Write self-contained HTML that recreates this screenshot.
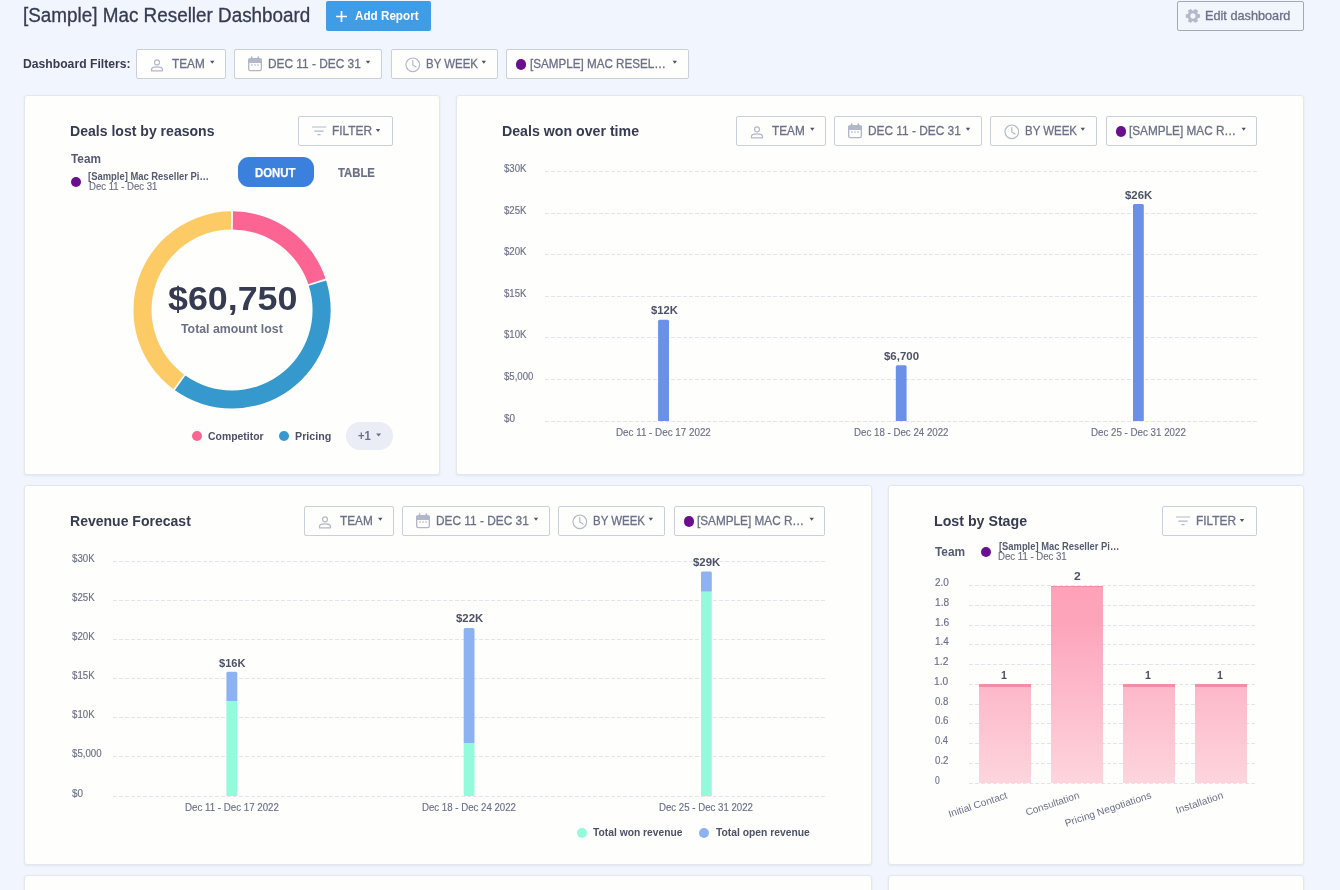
<!DOCTYPE html>
<html lang="en"><head><meta charset="utf-8"><title>[Sample] Mac Reseller Dashboard</title>
<style>
*{box-sizing:border-box;margin:0;padding:0}
html,body{width:1340px;height:890px;overflow:hidden;background:#f1f5fd;font-family:"Liberation Sans", Arial, sans-serif;}
#page{position:relative;width:1340px;height:890px;overflow:hidden;will-change:transform}
.t{position:absolute;white-space:nowrap;transform-origin:0 50%;display:block}
.ic{position:absolute;overflow:visible}
.btn{position:absolute;background:#fefefd;border:1px solid #cbcfd9;border-radius:2px}
.addbtn{position:absolute;background:#3f9de8;border-radius:2px}
.editbtn{position:absolute;border:1px solid #a3a8b8;border-radius:2px;background:#f1f5fc}
.card{position:absolute;background:#fefefc;border:1px solid #e2e7ee;border-radius:3px;box-shadow:0 1px 2px rgba(180,190,210,.25)}
.dot{position:absolute;width:10.200px;height:10.200px;border-radius:50%}
.pill{position:absolute;background:#3a80dc;border-radius:11px}
.more{position:absolute;background:#ebedf6;border-radius:14px}
.bar{position:absolute}
</style></head>
<body><div id="page">
<header>
<span class="t" id="t0" style="left:23.24px;top:6.41px;font-size:19.6px;line-height:19.6px;color:#363b52;font-weight:400;-webkit-text-stroke:0.3px #363b52;transform:scaleX(0.963);">[Sample] Mac Reseller Dashboard</span>
<div class="addbtn" style="left:326px;top:1px;width:105px;height:30px"></div>
<svg class="ic" style="left:336.4px;top:11.2px" width="11" height="11" viewBox="0 0 11 11" stroke="#fff" stroke-width="1.7" fill="none"><path d="M5.5 0v11M0 5.5h11"/></svg>
<span class="t" id="t1" style="left:354.8px;top:9.84px;font-size:12px;line-height:12px;color:#fff;font-weight:700;transform:scaleX(0.9731);">Add Report</span>
<div class="editbtn" style="left:1177px;top:1px;width:127px;height:30px"></div>
<svg class="ic" style="left:1183.65px;top:7px" width="17.9" height="17.9" viewBox="0 0 24 24"><path transform="rotate(90 12 12)" fill="#b5b8c8" d="M19.14 12.94c.04-.3.06-.61.06-.94 0-.32-.02-.64-.07-.94l2.03-1.58a.49.49 0 0 0 .12-.61l-1.92-3.32a.488.488 0 0 0-.59-.22l-2.39.96c-.5-.38-1.03-.7-1.62-.94l-.36-2.54a.484.484 0 0 0-.48-.41h-3.84c-.24 0-.43.17-.47.41l-.36 2.54c-.59.24-1.13.57-1.62.94l-2.39-.96c-.22-.08-.47 0-.59.22L2.74 8.87c-.12.21-.08.47.12.61l2.03 1.58c-.05.3-.09.63-.09.94s.02.64.07.94l-2.03 1.58a.49.49 0 0 0-.12.61l1.92 3.32c.12.22.37.29.59.22l2.39-.96c.5.38 1.03.7 1.62.94l.36 2.54c.05.24.24.41.48.41h3.84c.24 0 .44-.17.47-.41l.36-2.54c.59-.24 1.13-.56 1.62-.94l2.39.96c.22.08.47 0 .59-.22l1.92-3.32c.12-.22.07-.47-.12-.61l-2.01-1.58zM12 15.6c-1.98 0-3.6-1.62-3.6-3.6s1.62-3.6 3.6-3.6 3.6 1.62 3.6 3.6-1.62 3.6-3.6 3.6z"/></svg>
<span class="t" id="t2" style="left:1205.11px;top:9.6px;font-size:12.4px;line-height:12.4px;color:#6b6f88;font-weight:400;-webkit-text-stroke:0.3px #6b6f88;transform:scaleX(1.0248);">Edit dashboard</span>
</header>
<nav>
<span class="t" id="t3" style="left:23.28px;top:57.2px;font-size:13px;line-height:13px;color:#363b52;font-weight:700;transform:scaleX(0.9361);">Dashboard Filters:</span>
<div class="btn" style="left:136px;top:49px;width:90px;height:30px;"></div>
<svg class="ic" style="left:150px;top:57.900000000000006px" width="14" height="14" viewBox="0 0 24 24" fill="none" stroke="#b3b7c9" stroke-width="2"><circle cx="12" cy="7.5" r="4.2"/><path d="M2.5 22v-2.2c0-3 4.5-4.6 9.5-4.6s9.5 1.6 9.5 4.6V22z" stroke-linejoin="round"/></svg>
<span class="t" id="t4" style="left:171.9px;top:57.2px;font-size:13px;line-height:13px;color:#6b6f88;font-weight:400;-webkit-text-stroke:0.3px #6b6f88;transform:scaleX(0.9076);">TEAM</span>
<svg class="ic" style="left:0;top:0" width="1340" height="890"><path d="M210.1 60.8h4.4l-2.2 3z" fill="#4f546b"/></svg>
<div class="btn" style="left:234px;top:49px;width:148px;height:30px;"></div>
<svg class="ic" style="left:247px;top:56.400000000000006px" width="16" height="16" viewBox="0 0 24 24" fill="none" stroke="#b3b7c9" stroke-width="2"><rect x="2.5" y="4" width="19" height="18" rx="2.5"/><path d="M2.5 5.5h19v4h-19z" fill="#b3b7c9"/><path d="M7 1.5v4M17 1.5v4" stroke-width="2.4" stroke-linecap="round"/><path d="M6.5 13.5h2M11 13.5h2M15.5 13.5h2" stroke-width="2"/></svg>
<span class="t" id="t5" style="left:268.39px;top:57.2px;font-size:13px;line-height:13px;color:#6b6f88;font-weight:400;-webkit-text-stroke:0.3px #6b6f88;transform:scaleX(0.9129);">DEC 11 - DEC 31</span>
<svg class="ic" style="left:0;top:0" width="1340" height="890"><path d="M365.8 60.8h4.4l-2.2 3z" fill="#4f546b"/></svg>
<div class="btn" style="left:391px;top:49px;width:107px;height:30px;"></div>
<svg class="ic" style="left:404.7px;top:57.1px" width="15.6" height="15.6" viewBox="0 0 24 24" fill="none" stroke="#b3b7c9" stroke-width="1.8"><circle cx="12" cy="12" r="10.500"/><path d="M12 5.5V12.5l5 3" stroke-linecap="round" stroke-linejoin="round"/></svg>
<span class="t" id="t6" style="left:426.16px;top:57.2px;font-size:13px;line-height:13px;color:#6b6f88;font-weight:400;-webkit-text-stroke:0.3px #6b6f88;transform:scaleX(0.8809);">BY WEEK</span>
<svg class="ic" style="left:0;top:0" width="1340" height="890"><path d="M481.6 60.8h4.4l-2.2 3z" fill="#4f546b"/></svg>
<div class="btn" style="left:506px;top:49px;width:183px;height:30px;"></div>
<i class="dot" style="left:515.8px;top:59.400000000000006px;background:#6a0f8e"></i>
<span class="t" id="t7" style="left:529.89px;top:57.2px;font-size:13px;line-height:13px;color:#6b6f88;font-weight:400;-webkit-text-stroke:0.3px #6b6f88;transform:scaleX(0.8959);">[SAMPLE] MAC RESEL…</span>
<svg class="ic" style="left:0;top:0" width="1340" height="890"><path d="M672.6 60.8h4.4l-2.2 3z" fill="#4f546b"/></svg>
</nav>
<main>
<section>
<div class="card" style="left:24px;top:95px;width:416px;height:380px"></div>
<span class="t" id="t8" style="left:70.06px;top:123px;font-size:15px;line-height:15px;color:#363b52;font-weight:700;transform:scaleX(0.9369);">Deals lost by reasons</span>
<div class="btn" style="left:298px;top:116px;width:95px;height:30px;"></div>
<svg class="ic" style="left:312px;top:126px" width="14" height="10" viewBox="0 0 14 10" fill="none" stroke="#b3b7c9" stroke-width="1.15"><path d="M0 1h14M2.3 5.1h9.4M5.5 8.6h3"/></svg>
<span class="t" id="t9" style="left:332.08px;top:124.2px;font-size:13px;line-height:13px;color:#6b6f88;font-weight:400;-webkit-text-stroke:0.3px #6b6f88;transform:scaleX(0.9152);">FILTER</span>
<svg class="ic" style="left:0;top:0" width="1340" height="890"><path d="M375.8 129h4.4l-2.2 3z" fill="#4f546b"/></svg>
<span class="t" id="t10" style="left:70.81px;top:152.84px;font-size:12px;line-height:12px;color:#555a70;font-weight:700;transform:scaleX(0.982);">Team</span>
<i class="dot" style="left:71px;top:177px;background:#6a0f8e"></i>
<span class="t" id="t11" style="left:87.76px;top:171.53px;font-size:10px;line-height:10px;color:#555a70;font-weight:700;transform:scaleX(0.9416);">[Sample] Mac Reseller Pi…</span>
<span class="t" id="t12" style="left:88.85px;top:182.23px;font-size:10px;line-height:10px;color:#6b6f88;font-weight:400;-webkit-text-stroke:0.15px #6b6f88;transform:scaleX(0.9547);">Dec 11 - Dec 31</span>
<div class="pill" style="left:238px;top:157px;width:76px;height:29.5px"></div>
<span class="t" id="t13" style="left:254.67px;top:166.84px;font-size:12px;line-height:12px;color:#fff;font-weight:700;-webkit-text-stroke:0.25px #fff;transform:scaleX(0.9464);">DONUT</span>
<span class="t" id="t14" style="left:337.58px;top:166.84px;font-size:12px;line-height:12px;color:#6b6f88;font-weight:700;-webkit-text-stroke:0.2px #6b6f88;transform:scaleX(0.9432);">TABLE</span>
<svg class="ic" style="left:0;top:0" width="1340" height="890"><path d="M233 211.35A98.6 98.6 0 0 1 325.53 278.58L308.37 284.34A80.5 80.5 0 0 0 232.82 229.45Z" fill="#fb6493"/><path d="M326.11 280.38A98.6 98.6 0 0 1 174.86 390.27L185.36 375.53A80.5 80.5 0 0 0 308.85 285.81Z" fill="#3699cd"/><path d="M173.33 389.16A98.6 98.6 0 0 1 231.1 211.35L231.28 229.45A80.5 80.5 0 0 0 184.11 374.62Z" fill="#fdcb66"/></svg>
<span class="t" id="t15" style="left:167.76px;top:280.82px;font-size:34px;line-height:34px;color:#363b52;font-weight:700;transform:scaleX(1.0531);">$60,750</span>
<span class="t" id="t16" style="left:181.02px;top:322.96px;font-size:12.8px;line-height:12.8px;color:#6b6f88;font-weight:700;transform:scaleX(0.963);">Total amount lost</span>
<i class="dot" style="left:192px;top:431px;background:#f96593"></i>
<span class="t" id="t17" style="left:207.66px;top:430.69px;font-size:11px;line-height:11px;color:#4c5167;font-weight:700;transform:scaleX(0.9471);">Competitor</span>
<i class="dot" style="left:279px;top:431px;background:#3699cd"></i>
<span class="t" id="t18" style="left:295.09px;top:430.69px;font-size:11px;line-height:11px;color:#4c5167;font-weight:700;transform:scaleX(0.9734);">Pricing</span>
<div class="more" style="left:345.7px;top:422px;width:47px;height:27.5px"></div>
<span class="t" id="t19" style="left:357.79px;top:429.84px;font-size:12px;line-height:12px;color:#6b6f88;font-weight:700;transform:scaleX(0.9393);">+1</span>
<svg class="ic" style="left:0;top:0" width="1340" height="890"><path d="M376.1 433.4h5l-2.5 3.1z" fill="#6b6f88"/></svg>
</section>
<section>
<div class="card" style="left:456px;top:95px;width:848px;height:380px"></div>
<span class="t" id="t20" style="left:502.06px;top:123px;font-size:15px;line-height:15px;color:#363b52;font-weight:700;transform:scaleX(0.9447);">Deals won over time</span>
<div class="btn" style="left:736px;top:116px;width:90px;height:30px;"></div>
<svg class="ic" style="left:750px;top:124.89999999999999px" width="14" height="14" viewBox="0 0 24 24" fill="none" stroke="#b3b7c9" stroke-width="2"><circle cx="12" cy="7.5" r="4.2"/><path d="M2.5 22v-2.2c0-3 4.5-4.6 9.5-4.6s9.5 1.6 9.5 4.6V22z" stroke-linejoin="round"/></svg>
<span class="t" id="t21" style="left:771.9px;top:124.2px;font-size:13px;line-height:13px;color:#6b6f88;font-weight:400;-webkit-text-stroke:0.3px #6b6f88;transform:scaleX(0.9076);">TEAM</span>
<svg class="ic" style="left:0;top:0" width="1340" height="890"><path d="M810.1 127.8h4.4l-2.2 3z" fill="#4f546b"/></svg>
<div class="btn" style="left:834px;top:116px;width:148px;height:30px;"></div>
<svg class="ic" style="left:847px;top:123.39999999999999px" width="16" height="16" viewBox="0 0 24 24" fill="none" stroke="#b3b7c9" stroke-width="2"><rect x="2.5" y="4" width="19" height="18" rx="2.5"/><path d="M2.5 5.5h19v4h-19z" fill="#b3b7c9"/><path d="M7 1.5v4M17 1.5v4" stroke-width="2.4" stroke-linecap="round"/><path d="M6.5 13.5h2M11 13.5h2M15.5 13.5h2" stroke-width="2"/></svg>
<span class="t" id="t22" style="left:868.39px;top:124.2px;font-size:13px;line-height:13px;color:#6b6f88;font-weight:400;-webkit-text-stroke:0.3px #6b6f88;transform:scaleX(0.9129);">DEC 11 - DEC 31</span>
<svg class="ic" style="left:0;top:0" width="1340" height="890"><path d="M965.8 127.8h4.4l-2.2 3z" fill="#4f546b"/></svg>
<div class="btn" style="left:990px;top:116px;width:107px;height:30px;"></div>
<svg class="ic" style="left:1003.7px;top:124.1px" width="15.6" height="15.6" viewBox="0 0 24 24" fill="none" stroke="#b3b7c9" stroke-width="1.8"><circle cx="12" cy="12" r="10.500"/><path d="M12 5.5V12.5l5 3" stroke-linecap="round" stroke-linejoin="round"/></svg>
<span class="t" id="t23" style="left:1025.16px;top:124.2px;font-size:13px;line-height:13px;color:#6b6f88;font-weight:400;-webkit-text-stroke:0.3px #6b6f88;transform:scaleX(0.8809);">BY WEEK</span>
<svg class="ic" style="left:0;top:0" width="1340" height="890"><path d="M1080.6 127.8h4.4l-2.2 3z" fill="#4f546b"/></svg>
<div class="btn" style="left:1106px;top:116px;width:151px;height:30px;"></div>
<i class="dot" style="left:1115.8px;top:126.39999999999999px;background:#6a0f8e"></i>
<span class="t" id="t24" style="left:1129.21px;top:124.2px;font-size:13px;line-height:13px;color:#6b6f88;font-weight:400;-webkit-text-stroke:0.3px #6b6f88;transform:scaleX(0.9043);">[SAMPLE] MAC R…</span>
<svg class="ic" style="left:0;top:0" width="1340" height="890"><path d="M1241.5 127.8h4.4l-2.2 3z" fill="#4f546b"/></svg>
<svg class="ic" style="left:0;top:0" width="1340" height="890"><line x1="545" x2="1257" y1="171.5" y2="171.5" stroke="#e4e4ea" stroke-width="1" stroke-dasharray="4 2"/><line x1="545" x2="1257" y1="213.5" y2="213.5" stroke="#e4e4ea" stroke-width="1" stroke-dasharray="4 2"/><line x1="545" x2="1257" y1="254.5" y2="254.5" stroke="#e4e4ea" stroke-width="1" stroke-dasharray="4 2"/><line x1="545" x2="1257" y1="296.5" y2="296.5" stroke="#e4e4ea" stroke-width="1" stroke-dasharray="4 2"/><line x1="545" x2="1257" y1="337.5" y2="337.5" stroke="#e4e4ea" stroke-width="1" stroke-dasharray="4 2"/><line x1="545" x2="1257" y1="379.5" y2="379.5" stroke="#e4e4ea" stroke-width="1" stroke-dasharray="4 2"/><line x1="545" x2="1257" y1="421.5" y2="421.5" stroke="#e4e4ea" stroke-width="1" stroke-dasharray="4 2"/></svg>
<span class="t" id="t25" style="left:503.62px;top:163.53px;font-size:10px;line-height:10px;color:#6b6f88;font-weight:400;-webkit-text-stroke:0.15px #6b6f88;transform:scaleX(0.9609);">$30K</span>
<span class="t" id="t26" style="left:503.62px;top:205.53px;font-size:10px;line-height:10px;color:#6b6f88;font-weight:400;-webkit-text-stroke:0.15px #6b6f88;transform:scaleX(0.9609);">$25K</span>
<span class="t" id="t27" style="left:503.62px;top:246.53px;font-size:10px;line-height:10px;color:#6b6f88;font-weight:400;-webkit-text-stroke:0.15px #6b6f88;transform:scaleX(0.9609);">$20K</span>
<span class="t" id="t28" style="left:503.62px;top:288.54px;font-size:10px;line-height:10px;color:#6b6f88;font-weight:400;-webkit-text-stroke:0.15px #6b6f88;transform:scaleX(0.9609);">$15K</span>
<span class="t" id="t29" style="left:503.62px;top:329.54px;font-size:10px;line-height:10px;color:#6b6f88;font-weight:400;-webkit-text-stroke:0.15px #6b6f88;transform:scaleX(0.9609);">$10K</span>
<span class="t" id="t30" style="left:503.74px;top:371.54px;font-size:10px;line-height:10px;color:#6b6f88;font-weight:400;-webkit-text-stroke:0.15px #6b6f88;transform:scaleX(0.9581);">$5,000</span>
<span class="t" id="t31" style="left:503.68px;top:413.54px;font-size:10px;line-height:10px;color:#6b6f88;font-weight:400;-webkit-text-stroke:0.15px #6b6f88;transform:scaleX(0.9867);">$0</span>
<svg class="ic" style="left:0;top:0" width="1340" height="890"><path d="M658.1 421V321.2Q658.1 319.7 659.6 319.7H667.5Q669 319.7 669 321.2V421Z" fill="#6a90e8"/></svg>
<svg class="ic" style="left:0;top:0" width="1340" height="890"><path d="M895.8 421V366.7Q895.8 365.2 897.3 365.2H905.0999999999999Q906.5999999999999 365.2 906.5999999999999 366.7V421Z" fill="#6a90e8"/></svg>
<svg class="ic" style="left:0;top:0" width="1340" height="890"><path d="M1133 421V205.5Q1133 204 1134.5 204H1142.3Q1143.8 204 1143.8 205.5V421Z" fill="#6a90e8"/></svg>
<span class="t" id="t32" style="left:651.31px;top:304.89px;font-size:11px;line-height:11px;color:#4c5167;font-weight:700;transform:scaleX(1.019);">$12K</span>
<span class="t" id="t33" style="left:884.29px;top:350.69px;font-size:11px;line-height:11px;color:#4c5167;font-weight:700;transform:scaleX(1.042);">$6,700</span>
<span class="t" id="t34" style="left:1125.3px;top:190.49px;font-size:11px;line-height:11px;color:#4c5167;font-weight:700;transform:scaleX(1.0347);">$26K</span>
<span class="t" id="t35" style="left:616.02px;top:428.24px;font-size:10px;line-height:10px;color:#6b6f88;font-weight:400;-webkit-text-stroke:0.15px #6b6f88;transform:scaleX(0.9821);">Dec 11 - Dec 17 2022</span>
<span class="t" id="t36" style="left:853.97px;top:428.24px;font-size:10px;line-height:10px;color:#6b6f88;font-weight:400;-webkit-text-stroke:0.15px #6b6f88;transform:scaleX(0.9716);">Dec 18 - Dec 24 2022</span>
<span class="t" id="t37" style="left:1090.63px;top:428.24px;font-size:10px;line-height:10px;color:#6b6f88;font-weight:400;-webkit-text-stroke:0.15px #6b6f88;transform:scaleX(0.9746);">Dec 25 - Dec 31 2022</span>
</section>
<section>
<div class="card" style="left:24px;top:485px;width:848px;height:380px"></div>
<span class="t" id="t38" style="left:70.07px;top:513px;font-size:15px;line-height:15px;color:#363b52;font-weight:700;transform:scaleX(0.9349);">Revenue Forecast</span>
<div class="btn" style="left:304px;top:506px;width:90px;height:30px;"></div>
<svg class="ic" style="left:318px;top:514.9000000000001px" width="14" height="14" viewBox="0 0 24 24" fill="none" stroke="#b3b7c9" stroke-width="2"><circle cx="12" cy="7.5" r="4.2"/><path d="M2.5 22v-2.2c0-3 4.5-4.6 9.5-4.6s9.5 1.6 9.5 4.6V22z" stroke-linejoin="round"/></svg>
<span class="t" id="t39" style="left:339.9px;top:514.2px;font-size:13px;line-height:13px;color:#6b6f88;font-weight:400;-webkit-text-stroke:0.3px #6b6f88;transform:scaleX(0.9076);">TEAM</span>
<svg class="ic" style="left:0;top:0" width="1340" height="890"><path d="M378.1 517.8h4.4l-2.2 3z" fill="#4f546b"/></svg>
<div class="btn" style="left:402px;top:506px;width:148px;height:30px;"></div>
<svg class="ic" style="left:415px;top:513.4000000000001px" width="16" height="16" viewBox="0 0 24 24" fill="none" stroke="#b3b7c9" stroke-width="2"><rect x="2.5" y="4" width="19" height="18" rx="2.5"/><path d="M2.5 5.5h19v4h-19z" fill="#b3b7c9"/><path d="M7 1.5v4M17 1.5v4" stroke-width="2.4" stroke-linecap="round"/><path d="M6.5 13.5h2M11 13.5h2M15.5 13.5h2" stroke-width="2"/></svg>
<span class="t" id="t40" style="left:436.39px;top:514.2px;font-size:13px;line-height:13px;color:#6b6f88;font-weight:400;-webkit-text-stroke:0.3px #6b6f88;transform:scaleX(0.9129);">DEC 11 - DEC 31</span>
<svg class="ic" style="left:0;top:0" width="1340" height="890"><path d="M533.8 517.8h4.4l-2.2 3z" fill="#4f546b"/></svg>
<div class="btn" style="left:558px;top:506px;width:107px;height:30px;"></div>
<svg class="ic" style="left:571.7px;top:514.1px" width="15.6" height="15.6" viewBox="0 0 24 24" fill="none" stroke="#b3b7c9" stroke-width="1.8"><circle cx="12" cy="12" r="10.500"/><path d="M12 5.5V12.5l5 3" stroke-linecap="round" stroke-linejoin="round"/></svg>
<span class="t" id="t41" style="left:593.16px;top:514.2px;font-size:13px;line-height:13px;color:#6b6f88;font-weight:400;-webkit-text-stroke:0.3px #6b6f88;transform:scaleX(0.8809);">BY WEEK</span>
<svg class="ic" style="left:0;top:0" width="1340" height="890"><path d="M648.6 517.8h4.4l-2.2 3z" fill="#4f546b"/></svg>
<div class="btn" style="left:674px;top:506px;width:151px;height:30px;"></div>
<i class="dot" style="left:683.8px;top:516.4000000000001px;background:#6a0f8e"></i>
<span class="t" id="t42" style="left:697.21px;top:514.2px;font-size:13px;line-height:13px;color:#6b6f88;font-weight:400;-webkit-text-stroke:0.3px #6b6f88;transform:scaleX(0.9043);">[SAMPLE] MAC R…</span>
<svg class="ic" style="left:0;top:0" width="1340" height="890"><path d="M809.5 517.8h4.4l-2.2 3z" fill="#4f546b"/></svg>
<svg class="ic" style="left:0;top:0" width="1340" height="890"><line x1="113" x2="825" y1="561.5" y2="561.5" stroke="#e4e4ea" stroke-width="1" stroke-dasharray="4 2"/><line x1="113" x2="825" y1="600.5" y2="600.5" stroke="#e4e4ea" stroke-width="1" stroke-dasharray="4 2"/><line x1="113" x2="825" y1="639.5" y2="639.5" stroke="#e4e4ea" stroke-width="1" stroke-dasharray="4 2"/><line x1="113" x2="825" y1="678.5" y2="678.5" stroke="#e4e4ea" stroke-width="1" stroke-dasharray="4 2"/><line x1="113" x2="825" y1="717.5" y2="717.5" stroke="#e4e4ea" stroke-width="1" stroke-dasharray="4 2"/><line x1="113" x2="825" y1="756.5" y2="756.5" stroke="#e4e4ea" stroke-width="1" stroke-dasharray="4 2"/><line x1="113" x2="825" y1="796.5" y2="796.5" stroke="#e4e4ea" stroke-width="1" stroke-dasharray="4 2"/></svg>
<span class="t" id="t43" style="left:71.85px;top:553.53px;font-size:10px;line-height:10px;color:#6b6f88;font-weight:400;-webkit-text-stroke:0.15px #6b6f88;transform:scaleX(0.9668);">$30K</span>
<span class="t" id="t44" style="left:71.85px;top:592.53px;font-size:10px;line-height:10px;color:#6b6f88;font-weight:400;-webkit-text-stroke:0.15px #6b6f88;transform:scaleX(0.9668);">$25K</span>
<span class="t" id="t45" style="left:71.85px;top:631.53px;font-size:10px;line-height:10px;color:#6b6f88;font-weight:400;-webkit-text-stroke:0.15px #6b6f88;transform:scaleX(0.9668);">$20K</span>
<span class="t" id="t46" style="left:71.85px;top:670.53px;font-size:10px;line-height:10px;color:#6b6f88;font-weight:400;-webkit-text-stroke:0.15px #6b6f88;transform:scaleX(0.9668);">$15K</span>
<span class="t" id="t47" style="left:71.85px;top:709.53px;font-size:10px;line-height:10px;color:#6b6f88;font-weight:400;-webkit-text-stroke:0.15px #6b6f88;transform:scaleX(0.9668);">$10K</span>
<span class="t" id="t48" style="left:71.87px;top:748.53px;font-size:10px;line-height:10px;color:#6b6f88;font-weight:400;-webkit-text-stroke:0.15px #6b6f88;transform:scaleX(0.9679);">$5,000</span>
<span class="t" id="t49" style="left:71.85px;top:788.53px;font-size:10px;line-height:10px;color:#6b6f88;font-weight:400;-webkit-text-stroke:0.15px #6b6f88;transform:scaleX(0.9838);">$0</span>
<svg class="ic" style="left:0;top:0" width="1340" height="890"><path d="M226.4 701V673.3Q226.4 671.8 227.9 671.8H235.8Q237.3 671.8 237.3 673.3V701Z" fill="#8cb2f1"/></svg>
<svg class="ic" style="left:0;top:0" width="1340" height="890"><path d="M226.4 796V701H237.3V796Z" fill="#93fadb"/></svg>
<svg class="ic" style="left:0;top:0" width="1340" height="890"><path d="M463.7 743V629.5Q463.7 628 465.2 628H473Q474.5 628 474.5 629.5V743Z" fill="#8cb2f1"/></svg>
<svg class="ic" style="left:0;top:0" width="1340" height="890"><path d="M463.7 796V743H474.5V796Z" fill="#93fadb"/></svg>
<svg class="ic" style="left:0;top:0" width="1340" height="890"><path d="M701 591.8V572.9Q701 571.4 702.5 571.4H710.3Q711.8 571.4 711.8 572.9V591.8Z" fill="#8cb2f1"/></svg>
<svg class="ic" style="left:0;top:0" width="1340" height="890"><path d="M701 796V591.8H711.8V796Z" fill="#93fadb"/></svg>
<span class="t" id="t50" style="left:219.32px;top:657.69px;font-size:11px;line-height:11px;color:#4c5167;font-weight:700;transform:scaleX(1.0071);">$16K</span>
<span class="t" id="t51" style="left:456.3px;top:612.59px;font-size:11px;line-height:11px;color:#4c5167;font-weight:700;transform:scaleX(1.0347);">$22K</span>
<span class="t" id="t52" style="left:693.3px;top:556.69px;font-size:11px;line-height:11px;color:#4c5167;font-weight:700;transform:scaleX(1.0347);">$29K</span>
<span class="t" id="t53" style="left:184.79px;top:802.53px;font-size:10px;line-height:10px;color:#6b6f88;font-weight:400;-webkit-text-stroke:0.15px #6b6f88;transform:scaleX(0.9725);">Dec 11 - Dec 17 2022</span>
<span class="t" id="t54" style="left:422.03px;top:802.53px;font-size:10px;line-height:10px;color:#6b6f88;font-weight:400;-webkit-text-stroke:0.15px #6b6f88;transform:scaleX(0.9657);">Dec 18 - Dec 24 2022</span>
<span class="t" id="t55" style="left:659.41px;top:802.53px;font-size:10px;line-height:10px;color:#6b6f88;font-weight:400;-webkit-text-stroke:0.15px #6b6f88;transform:scaleX(0.966);">Dec 25 - Dec 31 2022</span>
<i class="dot" style="left:577.3px;top:827.7px;background:#93fadb"></i>
<span class="t" id="t56" style="left:592.96px;top:827.29px;font-size:11px;line-height:11px;color:#4c5167;font-weight:700;transform:scaleX(0.9345);">Total won revenue</span>
<i class="dot" style="left:699.3px;top:827.7px;background:#8cb2f1"></i>
<span class="t" id="t57" style="left:715.52px;top:827.29px;font-size:11px;line-height:11px;color:#4c5167;font-weight:700;transform:scaleX(0.9373);">Total open revenue</span>
</section>
<section>
<div class="card" style="left:888px;top:485px;width:416px;height:380px"></div>
<span class="t" id="t58" style="left:934.05px;top:513px;font-size:15px;line-height:15px;color:#363b52;font-weight:700;transform:scaleX(0.9463);">Lost by Stage</span>
<div class="btn" style="left:1162px;top:506px;width:95px;height:30px;"></div>
<svg class="ic" style="left:1176px;top:516px" width="14" height="10" viewBox="0 0 14 10" fill="none" stroke="#b3b7c9" stroke-width="1.15"><path d="M0 1h14M2.3 5.1h9.4M5.5 8.6h3"/></svg>
<span class="t" id="t59" style="left:1196.08px;top:514.2px;font-size:13px;line-height:13px;color:#6b6f88;font-weight:400;-webkit-text-stroke:0.3px #6b6f88;transform:scaleX(0.9152);">FILTER</span>
<svg class="ic" style="left:0;top:0" width="1340" height="890"><path d="M1239.8 519h4.4l-2.2 3z" fill="#4f546b"/></svg>
<span class="t" id="t60" style="left:934.8px;top:546.04px;font-size:12px;line-height:12px;color:#555a70;font-weight:700;transform:scaleX(0.9892);">Team</span>
<i class="dot" style="left:981px;top:547px;background:#6a0f8e"></i>
<span class="t" id="t61" style="left:998.58px;top:542.33px;font-size:10px;line-height:10px;color:#555a70;font-weight:700;transform:scaleX(0.9366);">[Sample] Mac Reseller Pi…</span>
<span class="t" id="t62" style="left:998.42px;top:551.93px;font-size:10px;line-height:10px;color:#6b6f88;font-weight:400;-webkit-text-stroke:0.15px #6b6f88;transform:scaleX(0.9605);">Dec 11 - Dec 31</span>
<svg class="ic" style="left:0;top:0" width="1340" height="890"><line x1="969" x2="1256" y1="585.5" y2="585.5" stroke="#e4e4ea" stroke-width="1" stroke-dasharray="4 2"/><line x1="969" x2="1256" y1="605.5" y2="605.5" stroke="#e4e4ea" stroke-width="1" stroke-dasharray="4 2"/><line x1="969" x2="1256" y1="625.5" y2="625.5" stroke="#e4e4ea" stroke-width="1" stroke-dasharray="4 2"/><line x1="969" x2="1256" y1="644.5" y2="644.5" stroke="#e4e4ea" stroke-width="1" stroke-dasharray="4 2"/><line x1="969" x2="1256" y1="664.5" y2="664.5" stroke="#e4e4ea" stroke-width="1" stroke-dasharray="4 2"/><line x1="969" x2="1256" y1="684.5" y2="684.5" stroke="#e4e4ea" stroke-width="1" stroke-dasharray="4 2"/><line x1="969" x2="1256" y1="704.5" y2="704.5" stroke="#e4e4ea" stroke-width="1" stroke-dasharray="4 2"/><line x1="969" x2="1256" y1="723.5" y2="723.5" stroke="#e4e4ea" stroke-width="1" stroke-dasharray="4 2"/><line x1="969" x2="1256" y1="743.5" y2="743.5" stroke="#e4e4ea" stroke-width="1" stroke-dasharray="4 2"/><line x1="969" x2="1256" y1="763.5" y2="763.5" stroke="#e4e4ea" stroke-width="1" stroke-dasharray="4 2"/><line x1="969" x2="1256" y1="783.5" y2="783.5" stroke="#e4e4ea" stroke-width="1" stroke-dasharray="4 2"/></svg>
<span class="t" id="t63" style="left:934.87px;top:577.53px;font-size:10px;line-height:10px;color:#6b6f88;font-weight:400;-webkit-text-stroke:0.15px #6b6f88;transform:scaleX(0.9938);">2.0</span>
<span class="t" id="t64" style="left:934.73px;top:597.53px;font-size:10px;line-height:10px;color:#6b6f88;font-weight:400;-webkit-text-stroke:0.15px #6b6f88;transform:scaleX(1.0133);">1.8</span>
<span class="t" id="t65" style="left:934.68px;top:617.53px;font-size:10px;line-height:10px;color:#6b6f88;font-weight:400;-webkit-text-stroke:0.15px #6b6f88;transform:scaleX(1.0224);">1.6</span>
<span class="t" id="t66" style="left:934.74px;top:636.53px;font-size:10px;line-height:10px;color:#6b6f88;font-weight:400;-webkit-text-stroke:0.15px #6b6f88;transform:scaleX(0.9976);">1.4</span>
<span class="t" id="t67" style="left:934.14px;top:656.53px;font-size:10px;line-height:10px;color:#6b6f88;font-weight:400;-webkit-text-stroke:0.15px #6b6f88;transform:scaleX(1.0365);">1.2</span>
<span class="t" id="t68" style="left:934.22px;top:676.53px;font-size:10px;line-height:10px;color:#6b6f88;font-weight:400;-webkit-text-stroke:0.15px #6b6f88;transform:scaleX(1.0167);">1.0</span>
<span class="t" id="t69" style="left:935.13px;top:696.53px;font-size:10px;line-height:10px;color:#6b6f88;font-weight:400;-webkit-text-stroke:0.15px #6b6f88;transform:scaleX(0.962);">0.8</span>
<span class="t" id="t70" style="left:935.13px;top:715.53px;font-size:10px;line-height:10px;color:#6b6f88;font-weight:400;-webkit-text-stroke:0.15px #6b6f88;transform:scaleX(0.9735);">0.6</span>
<span class="t" id="t71" style="left:935.17px;top:735.53px;font-size:10px;line-height:10px;color:#6b6f88;font-weight:400;-webkit-text-stroke:0.15px #6b6f88;transform:scaleX(0.937);">0.4</span>
<span class="t" id="t72" style="left:935.12px;top:755.53px;font-size:10px;line-height:10px;color:#6b6f88;font-weight:400;-webkit-text-stroke:0.15px #6b6f88;transform:scaleX(0.9714);">0.2</span>
<span class="t" id="t73" style="left:935.35px;top:775.53px;font-size:10px;line-height:10px;color:#6b6f88;font-weight:400;-webkit-text-stroke:0.15px #6b6f88;transform:scaleX(0.8555);">0</span>
<div class="bar" style="left:979px;top:684px;width:52px;height:99px;background:linear-gradient(#fda2b9 0,#fda4bb 18%,#fdd5dd 100%) bottom/100% 197.5px no-repeat;"></div><div class="bar" style="left:979px;top:684px;width:52px;height:3px;background:#f58ca5"></div>
<div class="bar" style="left:1051px;top:585.5px;width:52px;height:197.5px;background:linear-gradient(#fda2b9 0,#fda4bb 18%,#fdd5dd 100%) bottom/100% 197.5px no-repeat;"></div><div class="bar" style="left:1051px;top:585.5px;width:52px;height:1px;background:#f58ca5"></div>
<div class="bar" style="left:1123px;top:684px;width:52px;height:99px;background:linear-gradient(#fda2b9 0,#fda4bb 18%,#fdd5dd 100%) bottom/100% 197.5px no-repeat;"></div><div class="bar" style="left:1123px;top:684px;width:52px;height:3px;background:#f58ca5"></div>
<div class="bar" style="left:1195px;top:684px;width:52px;height:99px;background:linear-gradient(#fda2b9 0,#fda4bb 18%,#fdd5dd 100%) bottom/100% 197.5px no-repeat;"></div><div class="bar" style="left:1195px;top:684px;width:52px;height:3px;background:#f58ca5"></div>
<span class="t" id="t74" style="left:1001.2px;top:669.69px;font-size:11px;line-height:11px;color:#4c5167;font-weight:700;transform:scaleX(0.9694);">1</span>
<span class="t" id="t75" style="left:1073.53px;top:570.89px;font-size:11px;line-height:11px;color:#4c5167;font-weight:700;transform:scaleX(1.0963);">2</span>
<span class="t" id="t76" style="left:1145.2px;top:669.69px;font-size:11px;line-height:11px;color:#4c5167;font-weight:700;transform:scaleX(0.9694);">1</span>
<span class="t" id="t77" style="left:1217.2px;top:669.69px;font-size:11px;line-height:11px;color:#4c5167;font-weight:700;transform:scaleX(0.9694);">1</span>
<svg class="ic" style="left:0;top:0" width="1340" height="890" font-family='"Liberation Sans", Arial, sans-serif' font-size="10" fill="#6b6f88"><text x="1008" y="798" text-anchor="end" textLength="61.5" lengthAdjust="spacingAndGlyphs" transform="rotate(-18.5 1008 798)">Initial Contact</text><text x="1080" y="798" text-anchor="end" textLength="56" lengthAdjust="spacingAndGlyphs" transform="rotate(-18.5 1080 798)">Consultation</text><text x="1152" y="798" text-anchor="end" textLength="90.5" lengthAdjust="spacingAndGlyphs" transform="rotate(-18.5 1152 798)">Pricing Negotiations</text><text x="1224" y="798" text-anchor="end" textLength="49.5" lengthAdjust="spacingAndGlyphs" transform="rotate(-18.5 1224 798)">Installation</text></svg>
</section>
<section>
<div class="card" style="left:24px;top:875px;width:848px;height:40px"></div>
</section>
<section>
<div class="card" style="left:888px;top:875px;width:416px;height:40px"></div>
</section>
</main>
</div></body></html>
